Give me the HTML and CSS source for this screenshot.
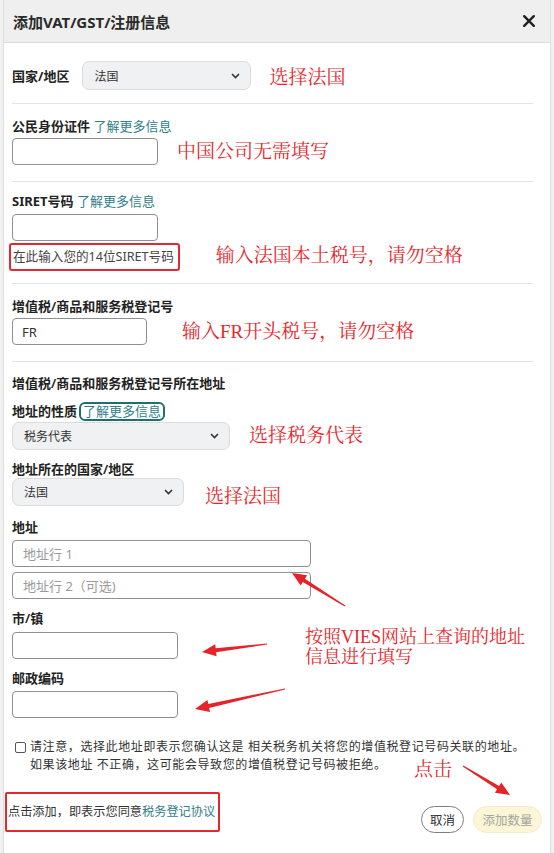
FILE: index.html
```html
<!DOCTYPE html>
<html lang="zh-CN">
<head>
  <meta charset="UTF-8" />
  <title>添加VAT/GST/注册信息</title>
  <link rel="stylesheet" href="styles.css">
</head>
<body>
  <div class="modal">
    <div class="modal-header">
      <h1>添加VAT/GST/注册信息</h1>
      <button class="close-btn" type="button" aria-label="关闭">
        <svg width="12" height="12" viewBox="0 0 12 12"><path d="M1.2 1.2L10.8 10.8M10.8 1.2L1.2 10.8" stroke="#222" stroke-width="2.4" stroke-linecap="round"/></svg>
      </button>
    </div>

    <div class="modal-body">
      <!-- 国家/地区 -->
      <div class="section section-country">
        <div class="row">
          <span class="label">国家/地区</span>
          <div class="select select-country">
            <span>法国</span>
            <svg class="chevron" width="9" height="6" viewBox="0 0 9 6"><path d="M1 1l3.5 3.5L8 1" fill="none" stroke="#333" stroke-width="1.6"/></svg>
          </div>
          <span class="note note-low">选择法国</span>
        </div>
      </div>

      <!-- 公民身份证件 -->
      <div class="section section-id">
        <div class="label">公民身份证件 <a class="link">了解更多信息</a></div>
        <div class="row">
          <input class="input input-short" type="text">
          <span class="note">中国公司无需填写</span>
        </div>
      </div>

      <!-- SIRET -->
      <div class="section section-siret">
        <div class="label">SIRET号码 <a class="link">了解更多信息</a></div>
        <input class="input input-short input-siret" type="text">
        <div class="row">
          <div class="hint-box">在此输入您的14位SIRET号码</div>
          <span class="note note-wide">输入法国本土税号，请勿空格</span>
        </div>
      </div>

      <!-- 增值税登记号 -->
      <div class="section section-vat">
        <div class="label">增值税/商品和服务税登记号</div>
        <div class="row">
          <input class="input input-fr" type="text" value="FR">
          <span class="note note-fr">输入FR开头税号，请勿空格</span>
        </div>
      </div>

      <!-- 地址 -->
      <div class="section section-address">
        <div class="label">增值税/商品和服务税登记号所在地址</div>

        <div class="label label-gap">地址的性质<a class="link link-focus">了解更多信息</a></div>
        <div class="row">
          <div class="select select-nature">
            <span>税务代表</span>
            <svg class="chevron" width="9" height="6" viewBox="0 0 9 6"><path d="M1 1l3.5 3.5L8 1" fill="none" stroke="#333" stroke-width="1.6"/></svg>
          </div>
          <span class="note">选择税务代表</span>
        </div>

        <div class="label label-gap2">地址所在的国家/地区</div>
        <div class="row">
          <div class="select select-country2">
            <span>法国</span>
            <svg class="chevron" width="9" height="6" viewBox="0 0 9 6"><path d="M1 1l3.5 3.5L8 1" fill="none" stroke="#333" stroke-width="1.6"/></svg>
          </div>
          <span class="note note-low2">选择法国</span>
        </div>

        <div class="label label-addr">地址</div>
        <input class="input input-long input-line1" type="text" placeholder="地址行 1">
        <input class="input input-long input-line2" type="text" placeholder="地址行 2（可选)">

        <div class="label label-city">市/镇</div>
        <input class="input input-city input-town" type="text">

        <div class="label label-zip">邮政编码</div>
        <input class="input input-city input-zip" type="text">

        <div class="confirm">
          <span class="checkbox"></span>
          <p>请注意，选择此地址即表示您确认这是 相关税务机关将您的增值税登记号码关联的地址。<br>如果该地址 不正确，这可能会导致您的增值税登记号码被拒绝。</p>
        </div>

        <div class="footer">
          <div class="agree-box">点击添加，即表示您同意<a class="link">税务登记协议</a></div>
          <div class="actions">
            <button class="btn btn-cancel" type="button">取消</button>
            <button class="btn btn-add" type="button">添加数量</button>
          </div>
        </div>
      </div>
    </div>
  </div>

  <!-- 标注层 -->
  <div class="annotations">
    <div class="note note-vies">按照VIES网站上查询的地址<br>信息进行填写</div>
    <div class="note note-click">点击</div>
    <svg class="arrows" width="554" height="853" viewBox="0 0 554 853">
      <g fill="#e5232a">
        <polygon points="345.3,605.6 304.9,578.7 307.1,575.3 292,573 300.7,585.5 302.8,582.1 344.7,606.4"/>
        <polygon points="266.9,643.5 215.7,648.3 215.2,644.3 202,652 216.6,656.3 216.1,652.3 267.1,644.5"/>
        <polygon points="284.9,688.5 208.3,704.0 207.4,700.1 195,709 210.0,711.9 209.1,708.0 285.1,689.5"/>
        <polygon points="463.3,765.6 499.1,785.9 501.3,782.5 510,795 494.9,792.7 497.1,789.3 462.7,766.4"/>
      </g>
    </svg>
  </div>
</body>
</html>
```

FILE: styles.css
```css
/* ---------- 基础 ---------- */
body {
  margin: 0;
  background: #f1f1f1;
  font-family: "Noto Sans", "Noto Sans CJK SC", sans-serif;
  color: #222;
  position: relative;
}
.modal {
  margin-left: 3px;
  width: 546px;
  height: 853px;
  background: #fff;
  border-left: 1px solid #dedede;
  border-right: 1px solid #dedede;
}
.modal-header {
  height: 42px;
  background: #efefef;
  border-bottom: 1px solid #dcdcdc;
  display: flex;
  align-items: center;
  justify-content: space-between;
  padding: 0 15px 0 9px;
}
.modal-header h1 {
  margin: 0;
  font-size: 15px;
  font-weight: bold;
  color: #2a2a2a;
}
.close-btn {
  border: none;
  background: none;
  padding: 0;
  width: 12px;
  height: 12px;
  display: flex;
}
.modal-body {
  padding: 0 17px 0 8px;
}
.section + .section {
  border-top: 1px solid #e3e3e3;
}
.row {
  display: flex;
  align-items: center;
}

/* ---------- 文字 ---------- */
.label {
  font-size: 13px;
  line-height: 18px;
  font-weight: bold;
  color: #222;
}
.link {
  color: #2f8089;
  font-weight: normal;
}
.link-focus {
  display: inline-block;
  margin-left: 2px;
  padding: 0 2px;
  line-height: 15px;
  border: 2px solid #1f6f72;
  border-radius: 6px;
}
.note {
  font-family: "Liberation Serif", "Noto Serif CJK SC", "Noto Sans CJK SC", serif;
  font-size: 19px;
  line-height: 22px;
  color: #e8262b;
  margin-left: 19px;
  white-space: nowrap;
}

/* ---------- 控件 ---------- */
.input {
  display: block;
  box-sizing: border-box;
  height: 27px;
  margin: 0;
  padding: 0 10px;
  border: 1px solid #8f8f8f;
  border-radius: 4px;
  background: #fff;
  font-family: inherit;
  font-size: 13px;
  color: #333;
}
.input::placeholder {
  color: #9a9a9a;
}
.input-short { width: 146px; }
.input-fr { width: 135px; padding-left: 9px; }
.input-long { width: 299px; }
.input-city { width: 166px; }

.select {
  box-sizing: border-box;
  height: 28px;
  display: flex;
  align-items: center;
  justify-content: space-between;
  padding: 0 10px 0 11px;
  background: #f0f1f2;
  border: 1px solid #dcdcdc;
  border-radius: 7px;
  font-size: 12px;
  color: #333;
}
.select-country { width: 169px; margin-left: 13px; height: 29px; }
.select-nature { width: 218px; }
.select-country2 { width: 172px; }

/* ---------- 分区间距 ---------- */
.section-country { padding: 18px 0 13px; }
.section-country .note-low { margin-left: 18px; margin-top: 4px; }

.section-id { padding: 13px 0 16px; }
.section-id .row { margin-top: 3px; }

.section-siret { padding: 10px 0 12px; }
.input-siret { margin-top: 4px; }
.hint-box {
  margin: 2px 0 0 -3px;
  box-sizing: border-box;
  height: 28px;
  padding: 0 4px 0 2px;
  border: 2px solid #e0282e;
  border-radius: 3px;
  font-size: 12.6px;
  line-height: 24px;
  color: #444;
  white-space: nowrap;
}
.note-wide { margin-left: 36px; }

.section-vat { padding: 13px 0 16px; }
.section-vat .label { font-weight: 600; }
.section-vat .row { margin-top: 3px; }
.note-fr { margin-left: 35px; }

.section-address { padding-top: 12px; }
.section-address .label { font-weight: 600; }
.label-gap { margin-top: 10px; margin-bottom: 1px; }
.label-gap2 { margin-top: 10px; }
.note-low2 { margin-left: 21px; transform: translateY(5px); }
.label-addr { margin-top: 12px; }
.input-line1 { margin-top: 4px; }
.input-line2 { margin-top: 5px; }
.label-city { margin-top: 10px; }
.input-town { margin-top: 5px; }
.label-zip { margin-top: 10px; }
.input-zip { margin-top: 4px; }

/* ---------- 确认 ---------- */
.confirm {
  margin-top: 20px;
  display: flex;
  align-items: flex-start;
}
.checkbox {
  box-sizing: border-box;
  width: 11px;
  height: 11px;
  margin: 4px 0 0 3px;
  border: 1px solid #555;
  border-radius: 2px;
  flex: none;
}
.confirm p {
  margin: 0 0 0 4px;
  font-size: 12px;
  letter-spacing: 0.6px;
  line-height: 18px;
  color: #333;
  white-space: nowrap;
}

/* ---------- 底部 ---------- */
.footer {
  margin: 18px -9px 0 -7px;
  display: flex;
  align-items: flex-end;
  justify-content: space-between;
}
.agree-box {
  box-sizing: border-box;
  height: 40px;
  padding: 0 3px 0 1px;
  border: 2px solid #e0282e;
  border-radius: 2px;
  font-size: 12.2px;
  line-height: 36px;
  color: #333;
  white-space: nowrap;
}
.actions {
  display: flex;
  gap: 9px;
  margin-bottom: -1px;
}
.btn {
  height: 27px;
  border-radius: 14px;
  font-family: inherit;
  font-size: 12.5px;
  padding: 0;
}
.btn-cancel {
  width: 43px;
  background: #fff;
  border: 1px solid #7d7d7d;
  color: #333;
}
.btn-add {
  width: 69px;
  background: #fcf5d6;
  border: 1px solid #f3eccb;
  color: #a5a5a0;
}

/* ---------- 标注层 ---------- */
.annotations {
  position: absolute;
  top: 0;
  left: 0;
  width: 554px;
  height: 853px;
  pointer-events: none;
}
.arrows {
  position: absolute;
  top: 0;
  left: 0;
}
.note-vies {
  position: absolute;
  left: 305px;
  top: 627px;
  margin: 0;
  font-size: 18px;
  line-height: 20px;
}
.note-click {
  position: absolute;
  left: 414px;
  top: 759px;
  margin: 0;
}
```
